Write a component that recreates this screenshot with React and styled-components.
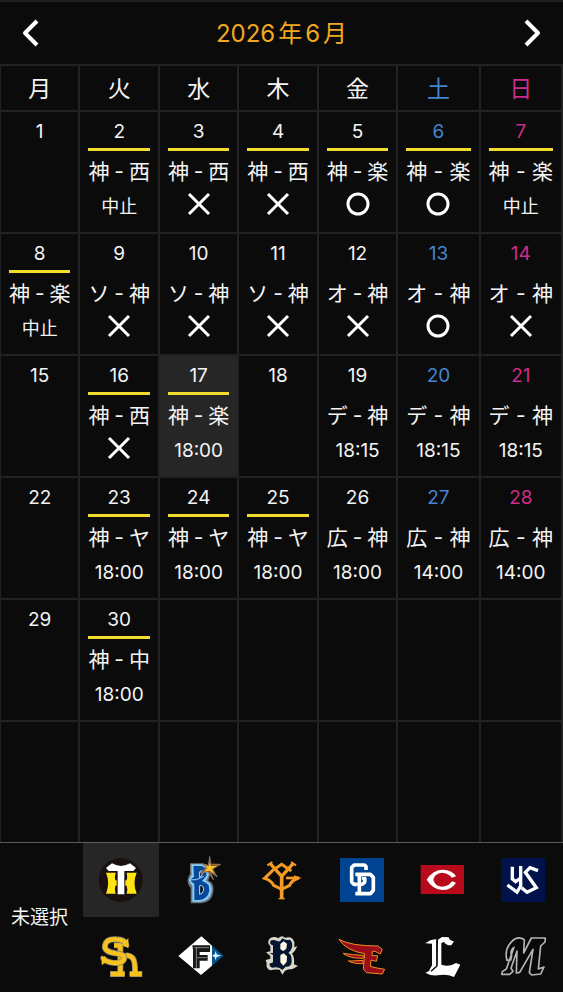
import React, { useState } from "react";
import styled, { createGlobalStyle } from "styled-components";

const GlobalStyle = createGlobalStyle`
  *, *::before, *::after { box-sizing: border-box; }
  body {
    margin: 0;
    background: #0b0b0b;
    color: #f4f4f4;
    font-family: Inter, "Noto Sans CJK JP", sans-serif;
    text-autospace: no-autospace;
  }
  button { font: inherit; color: inherit; background: none; border: 0; padding: 0; cursor: pointer; }
`;

const tones = { weekday: "#f4f4f4", saturday: "#4385cf", sunday: "#cb2d8b" };

const Page = styled.main`
  display: flex;
  flex-direction: column;
  min-height: 100vh;
  border-top: 2px solid #202020;
`;

const MonthBar = styled.header`
  display: flex;
  align-items: center;
  justify-content: space-between;
  height: 62px;
  padding: 0 16px;
`;

const MonthTitle = styled.h1`
  display: flex;
  gap: 3px;
  margin: 0;
  padding-top: 2px;
  color: #f2a922;
  font-size: 24px;
  font-weight: 400;
  line-height: 32px;
`;

const NavButton = styled.button`
  display: grid;
  place-items: center;
  width: 30px;
  height: 40px;
`;

const Calendar = styled.table`
  width: calc(100% + 1px);
  margin-left: -1px;
  table-layout: fixed;
  border-collapse: collapse;
`;

const DayColumn = styled.col`
  width: ${(p) => (p.$weekend ? "14.65%" : "14.14%")};
`;

const Weekday = styled.th`
  height: 46px;
  padding: 2px 0 0;
  border: 2px solid #222;
  color: ${(p) => tones[p.$tone]};
  font-size: 23px;
  font-weight: 400;
  line-height: 32px;
`;

const DayCell = styled.td`
  height: 122px;
  padding: 0 8px;
  border: 2px solid #222;
  background: ${(p) => (p.$today ? "#262626" : "transparent")};
  text-align: center;
  vertical-align: top;
  white-space: nowrap;
`;

const DayNumber = styled.div`
  height: 39px;
  border-bottom: 3px solid ${(p) => (p.$home ? "#f1dc2c" : "transparent")};
  color: ${(p) => tones[p.$tone]};
  font-size: 19px;
  line-height: 40px;
`;

const Matchup = styled.div`
  display: flex;
  justify-content: space-between;
  font-size: 21px;
  line-height: 42px;
`;

const outcomeHeights = { mark: "22px", note: "24px", time: "26px" };

const Outcome = styled.div`
  display: flex;
  align-items: center;
  justify-content: center;
  height: ${(p) => outcomeHeights[p.$kind]};
  font-size: ${(p) => (p.$kind === "note" ? "18px" : "19px")};
`;

const TeamPicker = styled.nav`
  display: grid;
  grid-template-columns: 79px 1fr;
  flex: 1;
  margin-top: -2px;
  border-top: 1px solid #5c5c5c;
  background: #0b0b0b;
  z-index: 1;
`;

const ClearButton = styled.button`
  font-size: 19px;
  line-height: 28px;
`;

const TeamGrid = styled.div`
  display: grid;
  grid-template-columns: repeat(6, 1fr);
  gap: 2px 4px;
  align-content: start;
  padding: 0 2px 0 4px;
`;

const TeamButton = styled.button`
  display: grid;
  place-items: center;
  height: 74px;
  background: ${(p) => (p.$selected ? "#262626" : "transparent")};
`;

const weekdays = ["月", "火", "水", "木", "金", "土", "日"];

const games = {
  2: ["神", "西", "中止", true],
  3: ["神", "西", "lose", true],
  4: ["神", "西", "lose", true],
  5: ["神", "楽", "win", true],
  6: ["神", "楽", "win", true],
  7: ["神", "楽", "中止", true],
  8: ["神", "楽", "中止", true],
  9: ["ソ", "神", "lose"],
  10: ["ソ", "神", "lose"],
  11: ["ソ", "神", "lose"],
  12: ["オ", "神", "lose"],
  13: ["オ", "神", "win"],
  14: ["オ", "神", "lose"],
  16: ["神", "西", "lose", true],
  17: ["神", "楽", "18:00", true],
  19: ["デ", "神", "18:15"],
  20: ["デ", "神", "18:15"],
  21: ["デ", "神", "18:15"],
  23: ["神", "ヤ", "18:00", true],
  24: ["神", "ヤ", "18:00", true],
  25: ["神", "ヤ", "18:00", true],
  26: ["広", "神", "18:00"],
  27: ["広", "神", "14:00"],
  28: ["広", "神", "14:00"],
  30: ["神", "中", "18:00", true],
};

const toneOf = (column) => (column === 5 ? "saturday" : column === 6 ? "sunday" : "weekday");

const kindOf = (outcome) => {
  if (outcome === "win" || outcome === "lose") return "mark";
  return outcome === "中止" ? "note" : "time";
};

function Chevron({ right }) {
  return (
    <svg width="20" height="30" viewBox="0 0 20 30" fill="none" stroke="#fff" strokeWidth="4" aria-hidden="true">
      <path d={right ? "M4 3 L16 15 L4 27" : "M16 3 L4 15 L16 27"} strokeLinejoin="round" />
    </svg>
  );
}

function Mark({ kind }) {
  return (
    <svg width="26" height="26" viewBox="0 0 26 26" fill="none" stroke="#fff" role="img" aria-label={kind === "win" ? "勝ち" : "負け"}>
      {kind === "win" ? <circle cx="13" cy="13" r="10" strokeWidth="3" /> : <path d="M3 3 L23 23 M23 3 L3 23" strokeWidth="3" />}
    </svg>
  );
}

function Day({ day, column }) {
  if (day > 30) return <DayCell />;
  const game = games[day];
  return (
    <DayCell $today={day === 17}>
      <DayNumber $tone={toneOf(column)} $home={game && game[3]}>{day}</DayNumber>
      {game && (
        <>
          <Matchup>
            <span>{game[0]}</span>
            <span>-</span>
            <span>{game[1]}</span>
          </Matchup>
          <Outcome $kind={kindOf(game[2])}>
            {kindOf(game[2]) === "mark" ? <Mark kind={game[2]} /> : game[2]}
          </Outcome>
        </>
      )}
    </DayCell>
  );
}

const teams = [
  {
    name: "阪神タイガース",
    box: "57 54 132 132",
    art: (
      <>
        <circle cx="122" cy="120" r="66" fill="#1b1010" />
        <path d="M78 98 H107 Q103 110 106 121 H140 Q143 110 140 98 H170 Q157 129 170 161 H140 Q144 149 140 137 H106 Q103 149 107 161 H78 Q91 129 78 98Z" fill="#ffe414" />
        <path d="M110 94 H136 V164 H110Z" fill="#1b1010" />
        <path d="M78 84 L96 70 Q110 78 123 78 Q136 78 150 70 L168 84 L160 93 H133 V163 H113 V93 H86Z" fill="#fff" />
      </>
    ),
  },
  {
    name: "横浜DeNAベイスターズ",
    box: "298 54 132 132",
    art: (
      <>
        <path d="M331 70 H370 Q396 76 391 105 L386 122 Q405 126 401 157 Q396 187 366 190 H333 V143 Q323 134 324 119 Q326 106 331 102Z" fill="#69747a" />
        <path d="M335 73 H368 Q392 77 387 106 L379 122 Q398 128 396 154 Q390 184 362 185 H338 V136 Q328 129 328 119 L336 104Z" fill="#8acbf5" />
        <path d="M341 78 H366 Q384 83 380 108 L367 123 Q391 129 389 153 Q383 178 360 180 H344 V131 Q334 127 332 119 L343 110Z" fill="#08489b" />
        <path d="M360 95 L366 92 Q369 94 367 105 L360 113Z M360 137 Q374 135 371 152 Q368 162 360 163Z" fill="#0b0b0b" stroke="#b9e3fb" strokeWidth="3" />
        <path d="M330 120 Q350 123 372 109" fill="none" stroke="#a4dafa" strokeWidth="3" />
        <path d="M390 49 L394 72 L423 73 L399 87 L413 111 L393 97 L401 119 L385 96 L361 99 L380 84 L369 72 L386 76Z" fill="#8e5423" stroke="#978b79" strokeWidth="2" />
        <path d="M390 68 L394 79 L412 77 L397 87 L404 102 L390 92 L373 95 L383 84 L375 76 L387 79Z" fill="#ffc326" />
      </>
    ),
  },
  {
    name: "読売ジャイアンツ",
    box: "60 54 132 132",
    art: (
      <g fill="none" stroke="#f59b25" strokeWidth="9">
        <path d="M90 70 L125 109 L160 70" strokeWidth="10" />
        <path d="M82 76 L97 66 M153 66 L168 76" strokeWidth="6" />
        <path d="M154 93 L125 73 L98 91 L74 115 Q94 121 101 136 L125 148 L149 136 Q154 121 176 114" />
        <path d="M125 105 V175" strokeWidth="11" />
        <path d="M116 176 H134" strokeWidth="4" />
        <path d="M138 114 H178" strokeWidth="8" />
        <path d="M65 115 L82 107 V121Z M185 114 L162 106 V120Z" fill="#f59b25" stroke="none" />
      </g>
    ),
  },
  {
    name: "中日ドラゴンズ",
    box: "300 54 132 132",
    art: (
      <>
        <rect x="300" y="54" width="132" height="132" fill="#004391" />
        <g fill="none" strokeLinejoin="bevel">
          <path d="M378 90 V79 L373 75 H343 L335 82 V126 L342 133 H366 L374 126 V114 H362" stroke="#fff" strokeWidth="11" />
          <path d="M347 103 H391 L400 112 V151 L391 161 H347 M358 103 V161" stroke="#004391" strokeWidth="15" />
          <path d="M346 103 H391 L400 112 V151 L391 161 H346 M358 103 V161" stroke="#fff" strokeWidth="11" />
          <path d="M350 133 H366 L374 126 V112" stroke="#fff" strokeWidth="9" />
        </g>
      </>
    ),
  },
  {
    name: "広島東洋カープ",
    box: "60 54 132 132",
    art: (
      <>
        <rect x="62" y="75" width="130" height="87" fill="#b70b1b" />
        <path d="M80 119 Q98 90 126 89 Q155 88 168 109 L156 113 Q145 99 126 98 Q103 101 100 119 Q103 137 126 140 Q145 140 156 124 L168 128 Q155 150 126 150 Q97 147 80 119Z" fill="#fff" />
      </>
    ),
  },
  {
    name: "東京ヤクルトスワローズ",
    box: "301 54 132 132",
    art: (
      <>
        <rect x="301" y="54" width="132" height="132" fill="#00124a" />
        <g fill="none" stroke="#fff" strokeWidth="10">
          <path d="M335 80 V117 L345 125 L360 114" />
          <path d="M360 78 V138 L349 156 L320 135" />
          <path d="M412 92 L388 83 L374 97 L407 143 L379 157 L363 143" />
        </g>
      </>
    ),
  },
  {
    name: "福岡ソフトバンクホークス",
    box: "57 48 132 132",
    art: (
      <g fill="none">
        <path d="M102 82 H121 V165 M90 168 H134 M120 126 Q139 103 157 119 Q166 128 165 165 M149 168 H187" stroke="#8a8668" strokeWidth="18" />
        <path d="M102 82 H121 V165 M92 168 H134 M120 126 Q139 103 157 119 Q166 128 165 165 M149 168 H185" stroke="#f8c21c" strokeWidth="13" />
        <path d="M139 86 Q140 65 109 64 Q79 62 75 82 Q71 101 107 106 Q139 109 131 126 Q120 139 92 133 Q70 128 69 116" stroke="#8a8668" strokeWidth="18" />
        <path d="M139 86 Q140 65 109 64 Q79 62 75 82 Q71 101 107 106 Q139 109 131 126 Q120 139 92 133 Q70 128 69 116" stroke="#f8c21c" strokeWidth="13" />
        <path d="M145 60 V91 L127 80Z M65 111 V142 L81 130Z" fill="#f8c21c" />
      </g>
    ),
  },
  {
    name: "北海道日本ハムファイターズ",
    box: "298 48 132 132",
    art: (
      <>
        <path d="M296 114 L365 55 L397 83 V143 L364 171Z" fill="#fff" />
        <path d="M397 83 L432 113 L397 143Z" fill="#075590" />
        <path d="M338 82 H391 V102 H360 V111 H384 V128 H360 V151 H340 V95Z" fill="#151718" />
        <path d="M344 89 H388 M350 89 V150 M352 119 H382" fill="none" stroke="#b8b8b8" strokeWidth="2" />
        <path d="M408 99 L411 109 L425 113 L411 117 L408 127 L405 117 L397 113 L405 109Z" fill="#d9f7ff" />
      </>
    ),
  },
  {
    name: "オリックス・バファローズ",
    box: "60 48 132 132",
    art: (
      <>
        <path d="M91 85 Q78 72 91 60 Q105 54 115 61 Q126 49 135 59 Q158 53 163 73 V88 L172 85 L164 99 L156 107 Q164 116 162 139 L174 144 L158 153 Q142 154 135 158 L127 170 L119 155 Q103 154 91 157 Q77 152 80 136 L77 126 L91 122 V114 L78 103 L91 100Z" fill="#d9d7c9" />
        <path d="M99 82 Q88 80 91 69 Q97 64 110 68 Q120 75 127 61 Q137 69 150 65 Q159 72 156 89 Q152 99 145 105 Q156 109 155 131 Q154 147 137 146 L127 156 Q117 144 97 149 Q87 147 89 136 Q101 137 99 127 V110 L88 105 H99Z" fill="#06152f" />
        <path d="M121 78 L131 70 L141 77 L139 92 L130 99 L121 94Z M121 111 L131 106 L141 115 L140 132 L130 143 L121 133Z" fill="#fff8e7" />
      </>
    ),
  },
  {
    name: "東北楽天ゴールデンイーグルス",
    box: "300 48 132 132",
    art: (
      <>
        <path d="M297 64 Q332 84 414 84 L427 94 L421 108 L405 100 H397 L396 113 H413 L409 130 L393 126 L391 145 L411 150 L434 154 L427 168 L380 164 L370 153 L374 107 Q318 98 297 64Z" fill="#980d19" stroke="#f08e23" strokeWidth="3" />
        <path d="M309 106 Q341 111 370 112 L369 121 Q326 121 309 106Z M325 129 Q344 129 369 127 L370 137 Q340 138 325 129Z" fill="#980d19" stroke="#f08e23" strokeWidth="3" />
      </>
    ),
  },
  {
    name: "埼玉西武ライオンズ",
    box: "60 48 132 132",
    art: (
      <>
        <path d="M76 76 L91 67 L109 63 V143 L93 158 H87 L96 142 V77Z M114 65 L126 57 L146 58 Q149 69 162 70 L154 82 Q139 83 132 72 L124 75 V140 Q149 148 168 135 L181 140 L162 177 Q138 166 113 172 Q91 174 76 164 L99 154 L112 141Z" fill="#fff" />
        <path d="M111 64 V144 L93 160" stroke="#0b0b0b" strokeWidth="4" fill="none" />
      </>
    ),
  },
  {
    name: "千葉ロッテマリーンズ",
    box: "301 48 132 132",
    art: (
      <path d="M319 127 Q310 94 333 71 Q347 56 363 61 L371 65 L369 105 L392 60 H434 L433 72 L420 84 L413 153 L430 147 L420 168 L393 171 L386 164 L397 94 L357 163 L347 165 L349 99 L331 151 L337 160 L327 169 H303 L305 161 L317 153 L340 88 Q327 98 333 113 L330 126Z" fill="#080808" stroke="#b5b5b5" strokeWidth="5" strokeLinejoin="round" />
    ),
  },
];

export default function App() {
  const [selected, setSelected] = useState(0);
  return (
    <>
      <GlobalStyle />
      <Page>
        <MonthBar>
          <NavButton aria-label="前の月"><Chevron /></NavButton>
          <MonthTitle>
            <span>2026</span>
            <span>年</span>
            <span>6</span>
            <span>月</span>
          </MonthTitle>
          <NavButton aria-label="次の月"><Chevron right /></NavButton>
        </MonthBar>
        <Calendar>
          <colgroup>
            {weekdays.map((name, i) => <DayColumn key={name} $weekend={i > 4} />)}
          </colgroup>
          <thead>
            <tr>
              {weekdays.map((name, i) => <Weekday key={name} scope="col" $tone={toneOf(i)}>{name}</Weekday>)}
            </tr>
          </thead>
          <tbody>
            {[0, 1, 2, 3, 4, 5].map((week) => (
              <tr key={week}>
                {weekdays.map((name, i) => <Day key={name} day={week * 7 + i + 1} column={i} />)}
              </tr>
            ))}
          </tbody>
        </Calendar>
        <TeamPicker aria-label="チーム選択">
          <ClearButton onClick={() => setSelected(-1)}>未選択</ClearButton>
          <TeamGrid>
            {teams.map((team, i) => (
              <TeamButton key={team.name} aria-label={team.name} aria-pressed={selected === i} $selected={selected === i} onClick={() => setSelected(i)}>
                <svg width="44" height="44" viewBox={team.box} overflow="visible" aria-hidden="true">{team.art}</svg>
              </TeamButton>
            ))}
          </TeamGrid>
        </TeamPicker>
      </Page>
    </>
  );
}
